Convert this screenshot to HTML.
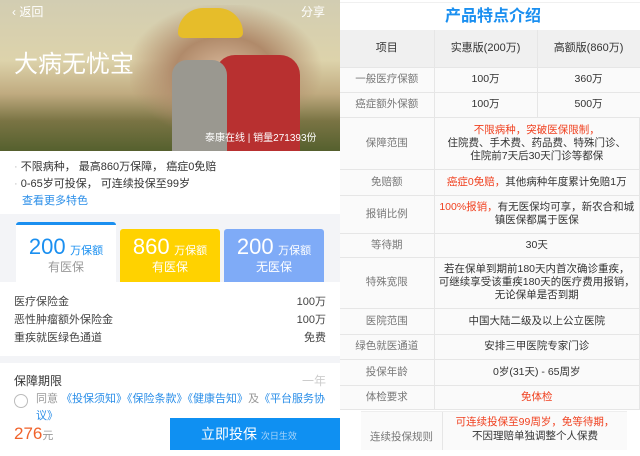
<!DOCTYPE html>
<html><head><meta charset="utf-8"><style>
*{margin:0;padding:0;box-sizing:border-box}
body{width:640px;height:450px;overflow:hidden;font-family:"Liberation Sans","Noto Sans CJK SC",sans-serif;background:#fff;position:relative}
.a{position:absolute;white-space:nowrap}
#L{position:absolute;left:0;top:0;width:340px;height:450px;background:#f3f4f7;overflow:hidden}
#hero{position:absolute;left:0;top:0;width:340px;height:151px;background:linear-gradient(180deg,#d2cdb2 0%,#ddd3ab 40%,#c0ab80 62%,#7a7444 80%,#55602e 100%)}
.w{background:#fff;position:absolute;left:0;width:340px}
.tab{position:absolute;top:229px;width:100px;height:53px;border-radius:3px 3px 0 0;text-align:center;color:#fff}
.tab b{font-weight:normal;font-size:22px}
.tab i{font-style:normal;font-size:11px}
.tab div{font-size:12px;margin-top:-2px}
#R{position:absolute;left:340px;top:0;width:300px;height:450px;background:#fff}
table{position:absolute;left:0;top:30px;width:300px;border-collapse:collapse;font-size:10.5px;text-align:center;color:#333}
td{border-bottom:1px solid #e6e6e6;background:#fafafa;line-height:13px}
td:first-child{width:94px;color:#777;border-right:1px solid #e6e6e6}
td:nth-child(2){border-right:1px solid #e6e6e6}
.r{color:#f0401f}
</style></head><body>
<div id="L">
<div id="hero">
<div style="position:absolute;left:130px;top:5px;width:210px;height:146px;background:radial-gradient(ellipse at 45% 45%,#d8b89a 0%,#b08a6a 30%,rgba(150,120,90,0) 60%)"></div>
<div style="position:absolute;left:178px;top:8px;width:65px;height:30px;border-radius:30px 30px 6px 6px;background:#e6bd2a"></div>
<div style="position:absolute;left:215px;top:55px;width:85px;height:96px;border-radius:20px 20px 0 0;background:#b83030"></div>
<div style="position:absolute;left:172px;top:60px;width:55px;height:91px;border-radius:15px 15px 0 0;background:#9a9890"></div>
<div class="a" style="left:12px;top:3px;color:#fff;font-size:12px">&#8249; 返回</div>
<div class="a" style="left:301px;top:3px;color:#fff;font-size:12px">分享</div>
<div class="a" style="left:14px;top:44px;color:#fff;font-size:24px">大病无忧宝</div>
<div class="a" style="left:205px;top:129px;color:#fff;font-size:10px">泰康在线 | 销量271393份</div>
</div>
<div class="w" style="top:151px;height:63px"></div>
<div class="a" style="left:14px;top:158px;font-size:11px;color:#333"><span style="color:#bbb">·</span> 不限病种， 最高860万保障， 癌症0免赔</div>
<div class="a" style="left:14px;top:175px;font-size:11px;color:#333"><span style="color:#bbb">·</span> 0-65岁可投保， 可连续投保至99岁</div>
<div class="a" style="left:22px;top:192px;font-size:11px;color:#2a8ee8">查看更多特色</div>
<div class="tab" style="left:16px;top:222px;height:60px;background:#fff;border-top:3px solid #1a8ff0;color:#999;padding-top:9px"><b style="color:#1a8ff0">200</b> <i style="color:#1a8ff0">万保额</i><div>有医保</div></div>
<div class="tab" style="left:120px;background:#ffd200;padding-top:5px"><b>860</b> <i>万保额</i><div>有医保</div></div>
<div class="tab" style="left:224px;background:#7fabf7;padding-top:5px"><b>200</b> <i>万保额</i><div>无医保</div></div>
<div class="w" style="top:282px;height:74px"></div>
<div class="a" style="left:14px;top:293px;font-size:11px;color:#444">医疗保险金</div><div class="a" style="right:14px;top:293px;font-size:11px;color:#444">100万</div>
<div class="a" style="left:14px;top:311px;font-size:11px;color:#444">恶性肿瘤额外保险金</div><div class="a" style="right:14px;top:311px;font-size:11px;color:#444">100万</div>
<div class="a" style="left:14px;top:329px;font-size:11px;color:#444">重疾就医绿色通道</div><div class="a" style="right:14px;top:329px;font-size:11px;color:#444">免费</div>
<div class="w" style="top:363px;height:87px"></div>
<div class="a" style="left:14px;top:372px;font-size:12px;color:#333">保障期限</div>
<div class="a" style="right:14px;top:372px;font-size:12px;color:#ccc">一年</div>
<div style="position:absolute;left:14px;top:394px;width:14px;height:14px;border:1px solid #bbb;border-radius:50%"></div>
<div style="position:absolute;left:36px;top:391px;width:298px;font-size:11px;line-height:17px;color:#999">同意 <span style="color:#2a8ee8">《投保须知》《保险条款》《健康告知》</span>及<span style="color:#2a8ee8">《平台服务协议》</span></div>
<div class="a" style="left:14px;top:424px;font-size:17px;color:#f0622a">276<span style="font-size:11px;color:#999">元</span></div>
<div style="position:absolute;left:170px;top:418px;width:170px;height:32px;background:#0f90f2;color:#fff;font-size:14px;line-height:32px;padding-left:31px">立即投保 <span style="font-size:9px;color:#a8d4fa">次日生效</span></div>
</div>
<div id="R">
<div class="a" style="left:105px;top:2px;font-size:16px;color:#1a8ff0;font-weight:bold">产品特点介绍</div>
<div style="position:absolute;left:0;top:2px;width:300px;height:1px;background:#f0f0f0"></div>
<table>
<tr style="height:37px"><td style="background:#f0f0f0;color:#333;font-size:11px">项目</td><td style="background:#f0f0f0;font-size:11px">实惠版(200万)</td><td style="background:#f0f0f0;font-size:11px">高额版(860万)</td></tr>
<tr style="height:25px"><td>一般医疗保额</td><td>100万</td><td>360万</td></tr>
<tr style="height:25px"><td>癌症额外保额</td><td>100万</td><td>500万</td></tr>
<tr style="height:52px"><td>保障范围</td><td colspan="2"><span class="r">不限病种，突破医保限制，</span><br>住院费、手术费、药品费、特殊门诊、<br>住院前7天后30天门诊等都保</td></tr>
<tr style="height:26px"><td>免赔额</td><td colspan="2"><span class="r">癌症0免赔，</span>其他病种年度累计免赔1万</td></tr>
<tr style="height:38px"><td>报销比例</td><td colspan="2"><span class="r">100%报销，</span>有无医保均可享，新农合和城<br>镇医保都属于医保</td></tr>
<tr style="height:24px"><td>等待期</td><td colspan="2">30天</td></tr>
<tr style="height:51px"><td>特殊宽限</td><td colspan="2">若在保单到期前180天内首次确诊重疾，<br>可继续享受该重疾180天的医疗费用报销，<br>无论保单是否到期</td></tr>
<tr style="height:26px"><td>医院范围</td><td colspan="2">中国大陆二级及以上公立医院</td></tr>
<tr style="height:25px"><td>绿色就医通道</td><td colspan="2">安排三甲医院专家门诊</td></tr>
<tr style="height:26px"><td>投保年龄</td><td colspan="2">0岁(31天) - 65周岁</td></tr>
<tr style="height:24px"><td>体检要求</td><td colspan="2" class="r">免体检</td></tr>
</table>
<div style="position:absolute;left:21px;top:412px;width:82px;height:38px;background:#fafafa;border-right:1px solid #e6e6e6;font-size:10.5px;color:#777;text-align:center;line-height:38px;padding-top:6px">连续投保规则</div>
<div style="position:absolute;left:21px;top:411px;width:266px;height:1px;background:#eee"></div>
<div style="position:absolute;left:103px;top:412px;width:184px;height:38px;background:#fafafa;font-size:10.5px;color:#333;text-align:center;line-height:14px;padding-top:3px"><span class="r">可连续投保至99周岁，免等待期，</span><br>不因理赔单独调整个人保费</div>
</div>
</body></html>
